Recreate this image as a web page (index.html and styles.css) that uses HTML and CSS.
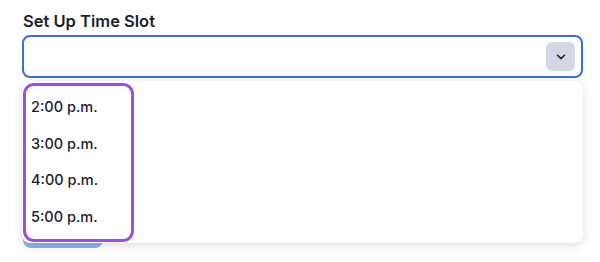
FILE: index.html
```html
<!DOCTYPE html>
<html>
<head>
<meta charset="utf-8">
<link rel="stylesheet" href="styles.css">
</head>
<body>
<div class="field">
  <label class="label">Set Up Time Slot</label>
  <div class="select-wrap">
    <div class="select">
      <span class="chev-btn">
        <svg width="10" height="6" viewBox="0 0 10 6"><path d="M1.5 1.2 L5 4.6 L8.5 1.2" fill="none" stroke="#1e2030" stroke-width="1.6" stroke-linecap="round" stroke-linejoin="round"/></svg>
      </span>
    </div>
    <div class="menu">
      <ul class="options">
        <li>2:00 p.m.</li>
        <li>3:00 p.m.</li>
        <li>4:00 p.m.</li>
        <li>5:00 p.m.</li>
      </ul>
    </div>
  </div>
  <div class="actions">
    <div class="btn"></div>
  </div>
</div>
</body>
</html>
```
FILE: styles.css
```css
* { box-sizing: border-box; }
html, body { margin: 0; padding: 0; background: #ffffff; }
body {
  font-family: Inter, "Noto Sans", sans-serif;
  color: #1e2030;
  width: 600px;
  height: 262px;
  overflow: hidden;
}
.field {
  padding: 9px 17px 0 22px;
  display: flex;
  flex-direction: column;
}
.label {
  font-size: 16.5px;
  line-height: 24px;
  font-weight: 600;
  padding-left: 1px;
  color: #1c1e2e;
}
.select-wrap {
  position: relative;
  margin-top: 2px;
}
.select {
  height: 43px;
  border: 2px solid #3b6fe0;
  border-radius: 8px;
  display: flex;
  justify-content: flex-end;
  align-items: flex-start;
  padding: 5px 6px 0 0;
  background: #fff;
}
.chev-btn {
  width: 29px;
  height: 29px;
  background: #d5d6e4;
  border-radius: 6px;
  display: flex;
  align-items: center;
  justify-content: center;
}
.menu {
  position: absolute;
  left: 0;
  right: 0;
  top: 46px;
  background: #fff;
  border-radius: 8px;
  box-shadow: 0 3px 10px rgba(30, 32, 60, 0.13), 0 0 2px rgba(30, 32, 60, 0.06);
  padding: 2px 0 1px 1px;
  z-index: 2;
}
.options {
  list-style: none;
  margin: 0;
  width: 111px;
  border: 3px solid #9d4fdc;
  border-radius: 11px;
  padding: 3px 0 3.5px 5px;
}
.options li {
  font-size: 14.5px;
  font-weight: 500;
  line-height: 20px;
  padding: 8.25px 0;
  color: #1e2030;
}
.actions {
  margin-top: 134px;
  display: flex;
}
.btn {
  width: 80px;
  height: 36px;
  margin-left: 1px;
  border-radius: 8px;
  background: #8fb0ef;
}
```
